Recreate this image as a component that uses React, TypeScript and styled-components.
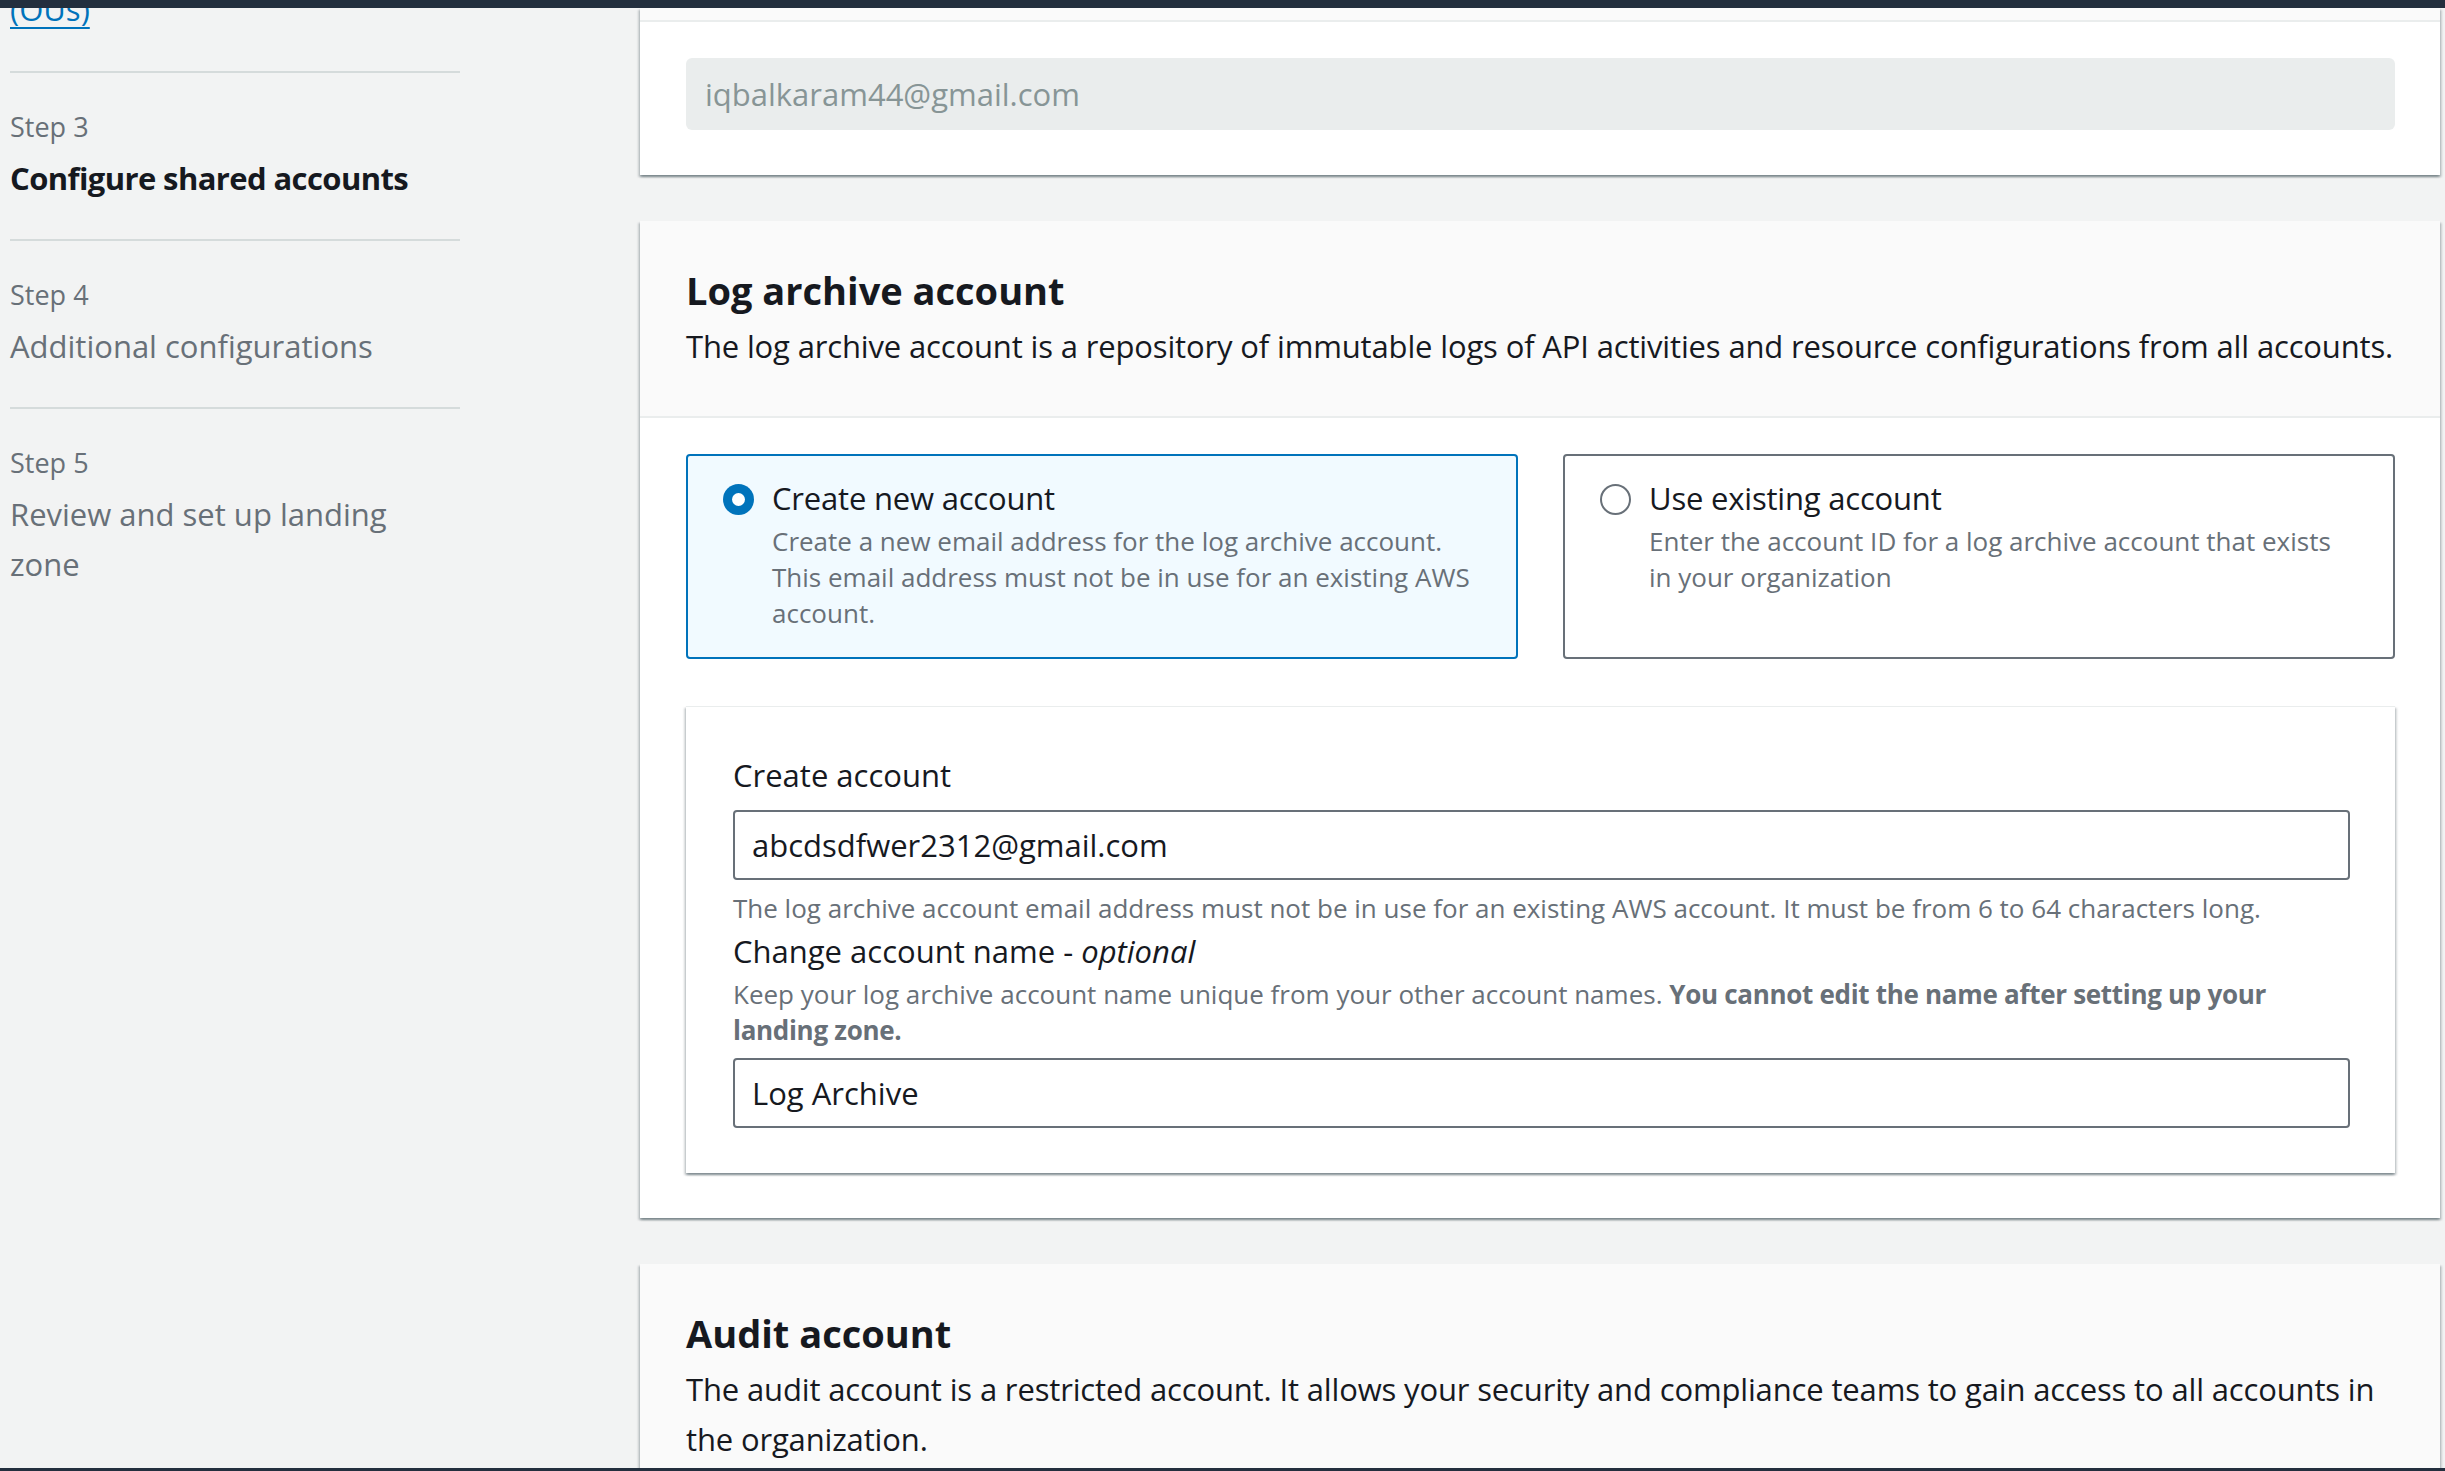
import styled, { createGlobalStyle } from 'styled-components'

const GlobalStyle = createGlobalStyle`
  html, body {
    margin: 0;
    padding: 0;
  }
  body {
    background: #f2f3f3;
    font-family: "Open Sans", "Liberation Sans", sans-serif;
    color: #16191f;
  }
  * {
    box-sizing: border-box;
  }
`

const shadow = `
  box-shadow: 0 2px 2px 0 rgba(0, 28, 36, 0.3),
    2px 2px 2px 0 rgba(0, 28, 36, 0.15),
    -2px 2px 2px 0 rgba(0, 28, 36, 0.15);
`

const Page = styled.div`
  height: 100vh;
  display: flex;
  flex-direction: column;
  overflow: hidden;
  border-top: 8px solid #232f3e;
  border-bottom: 3px solid #232f3e;
`

const Layout = styled.div`
  flex: 1;
  min-height: 0;
  display: grid;
  grid-template-columns: 640px 1fr;
  padding-right: 5px;
  overflow: hidden;
`

const Nav = styled.nav`
  padding-left: 10px;
  margin-top: -24px;
`

const NavList = styled.ol`
  list-style: none;
  margin: 0;
  padding: 0;
  width: 450px;
`

const NavItem = styled.li`
  padding: 36px 0;
  &:first-child {
    padding-top: 0;
    padding-bottom: 37px;
  }
  & + & {
    border-top: 2px solid #d5dbdb;
  }
`

const NavLink = styled.a`
  font-size: 31px;
  line-height: 50px;
  color: #0073bb;
  text-decoration: underline;
  text-underline-offset: 6px;
  text-decoration-thickness: 2px;
`

const StepLabel = styled.div`
  font-size: 27px;
  line-height: 36px;
  color: #687078;
  margin-bottom: 8px;
`

const StepTitle = styled.div<{ $active?: boolean }>`
  font-size: 31px;
  line-height: 50px;
  max-width: 420px;
  color: ${p => (p.$active ? '#16191f' : '#687078')};
  font-weight: ${p => (p.$active ? 700 : 400)};
  letter-spacing: ${p => (p.$active ? '-0.6px' : '0')};
`

const Main = styled.main`
  display: flex;
  flex-direction: column;
  gap: 46px;
`

const Card = styled.section`
  background: #fff;
  ${shadow}
`

const CutHeader = styled.div`
  height: 14px;
  background: #fafafa;
  border-bottom: 2px solid #eaeded;
`

const CardHeader = styled.header`
  background: #fafafa;
  padding: 44px 46px 45px;
  border-bottom: 2px solid #eaeded;
`

const Heading = styled.h2`
  margin: 0 0 6px;
  font-size: 38px;
  line-height: 50px;
  font-weight: 700;
`

const HeaderText = styled.p`
  margin: 0;
  font-size: 31px;
  line-height: 50px;
  letter-spacing: -0.15px;
`

const CardBody = styled.div`
  padding: 36px 45px 45px 46px;
`

const DisabledInput = styled.input`
  display: block;
  width: 100%;
  height: 72px;
  border: none;
  border-radius: 6px;
  background: #eaeded;
  padding: 0 19px;
  font-family: inherit;
  font-size: 31px;
  color: #879596;
  outline: none;
`

const Tiles = styled.div`
  display: grid;
  grid-template-columns: 1fr 1fr;
  gap: 45px;
`

const Tile = styled.label<{ $checked?: boolean }>`
  display: flex;
  align-items: flex-start;
  gap: 18px;
  padding: 17px 34px 26px 35px;
  border: 2px solid ${p => (p.$checked ? '#0073bb' : '#687078')};
  border-radius: 4px;
  background: ${p => (p.$checked ? '#f1faff' : '#fff')};
`

const Radio = styled.span<{ $checked?: boolean }>`
  flex: none;
  position: relative;
  width: 31px;
  height: 31px;
  margin-top: 11px;
  border-radius: 50%;
  background: ${p => (p.$checked ? '#0073bb' : '#fff')};
  border: ${p => (p.$checked ? 'none' : '2px solid #687078')};
  &::after {
    content: '';
    display: ${p => (p.$checked ? 'block' : 'none')};
    position: absolute;
    left: 50%;
    top: 50%;
    width: 13px;
    height: 13px;
    margin: -6.5px 0 0 -6.5px;
    border-radius: 50%;
    background: #fff;
  }
`

const TileText = styled.div`
  display: flex;
  flex-direction: column;
`

const TileTitle = styled.span`
  font-size: 31px;
  line-height: 50px;
  color: #16191f;
  letter-spacing: -0.2px;
`

const SmallText = styled.span`
  font-size: 26px;
  line-height: 36px;
  color: #687078;
`

const InnerBox = styled.div`
  margin-top: 47px;
  background: #fff;
  border-top: 1px solid #eaeded;
  padding: 43px 45px 45px 47px;
  ${shadow}
`

const FieldLabel = styled.div`
  font-size: 31px;
  line-height: 50px;
  color: #16191f;
  em {
    font-style: italic;
  }
`

const TextInput = styled.input`
  display: block;
  width: 100%;
  height: 70px;
  margin: 10px 0;
  border: 2px solid #687078;
  border-radius: 4px;
  padding: 0 17px;
  font-family: inherit;
  font-size: 31px;
  color: #16191f;
  background: #fff;
  outline: none;
  &:last-child {
    margin-bottom: 0;
  }
`

const Hint = styled.div`
  font-size: 26px;
  line-height: 36px;
  color: #687078;
  padding-right: 40px;
  strong {
    font-weight: 700;
    letter-spacing: -0.3px;
  }
`

const steps = [
  { n: 3, title: 'Configure shared accounts', active: true },
  { n: 4, title: 'Additional configurations' },
  { n: 5, title: 'Review and set up landing zone' },
]

export default function App() {
  return (
    <>
      <GlobalStyle />
      <Page>
        <Layout>
          <Nav>
            <NavList>
              <NavItem>
                <NavLink href="#">(OUs)</NavLink>
              </NavItem>
              {steps.map(s => (
                <NavItem key={s.n}>
                  <StepLabel>Step {s.n}</StepLabel>
                  <StepTitle $active={s.active}>{s.title}</StepTitle>
                </NavItem>
              ))}
            </NavList>
          </Nav>

          <Main>
            <Card>
              <CutHeader />
              <CardBody>
                <DisabledInput readOnly disabled value="iqbalkaram44@gmail.com" />
              </CardBody>
            </Card>

            <Card>
              <CardHeader>
                <Heading>Log archive account</Heading>
                <HeaderText>
                  The log archive account is a repository of immutable logs of API activities and resource configurations from all accounts.
                </HeaderText>
              </CardHeader>
              <CardBody>
                <Tiles>
                  <Tile $checked>
                    <Radio $checked />
                    <TileText>
                      <TileTitle>Create new account</TileTitle>
                      <SmallText>
                        Create a new email address for the log archive account. This email address must not be in use for an existing AWS account.
                      </SmallText>
                    </TileText>
                  </Tile>
                  <Tile>
                    <Radio />
                    <TileText>
                      <TileTitle>Use existing account</TileTitle>
                      <SmallText>
                        Enter the account ID for a log archive account that exists in your organization
                      </SmallText>
                    </TileText>
                  </Tile>
                </Tiles>

                <InnerBox>
                  <FieldLabel>Create account</FieldLabel>
                  <TextInput readOnly value="abcdsdfwer2312@gmail.com" />
                  <Hint>
                    The log archive account email address must not be in use for an existing AWS account. It must be from 6 to 64 characters long.
                  </Hint>
                  <FieldLabel>
                    Change account name - <em>optional</em>
                  </FieldLabel>
                  <Hint>
                    Keep your log archive account name unique from your other account names. <strong>You cannot edit the name after setting up your landing zone.</strong>
                  </Hint>
                  <TextInput readOnly value="Log Archive" />
                </InnerBox>
              </CardBody>
            </Card>

            <Card>
              <CardHeader>
                <Heading>Audit account</Heading>
                <HeaderText>
                  The audit account is a restricted account. It allows your security and compliance teams to gain access to all accounts in the organization.
                </HeaderText>
              </CardHeader>
            </Card>
          </Main>
        </Layout>
      </Page>
    </>
  )
}
